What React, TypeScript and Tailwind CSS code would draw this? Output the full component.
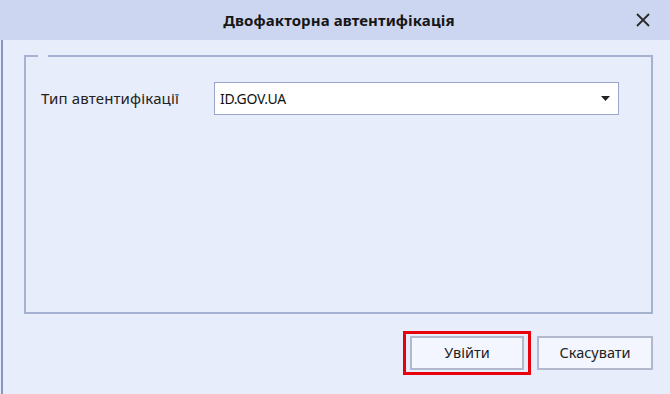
import React from "react";

export default function App() {
  return (
    <div
      className="w-[670px] h-[394px] bg-[#e8edfc] flex flex-col overflow-hidden"
      style={{ fontFamily: '"Noto Sans", "Open Sans", sans-serif' }}
    >
      <div className="relative h-[40px] bg-[#ccd6f0] flex items-center justify-center shrink-0">
        <span className="text-[15px] font-bold text-[#161616] tracking-[0.1px] ml-[8px]">Двофакторна автентифікація</span>
        <svg className="absolute left-[636px] top-[13px]" width="14" height="14" viewBox="0 0 14 14">
          <path d="M1 1 L13 13 M13 1 L1 13" stroke="#2a2a2a" strokeWidth="1.8" fill="none" />
        </svg>
      </div>
      <div className="flex-1 ml-[1px] border-l-2 border-[#8c96bd] flex flex-col pl-[21px] pr-[17px]">
        <div className="relative mt-[15px] h-[259px] border-2 border-[#a7b1d2]">
          <div className="absolute left-[12px] top-[-2px] w-[10px] h-[2px] bg-[#e8edfc]" />
          <div className="flex items-center mt-[25px] pl-[15px]">
            <span className="w-[173px] text-[15px] text-[#222] tracking-[0.15px]">Тип автентифікації</span>
            <div className="w-[405px] h-[33px] bg-white border border-[#9aa5c9] flex items-center pl-[5px] pr-[8px]">
              <span className="flex-1 text-[14px] text-[#111] tracking-[-0.3px]">ID.GOV.UA</span>
              <svg width="9" height="5" viewBox="0 0 9 5">
                <path d="M0 0 L9 0 L4.5 5 Z" fill="#222" />
              </svg>
            </div>
          </div>
        </div>
        <div className="flex justify-end items-center mt-[17px] gap-[6px]">
          <div className="border-[3px] border-[#e8000b] px-[4px] py-[2px]">
            <button className="w-[114px] h-[34px] bg-[#f3f6fe] border-2 border-[#b2b9cc] text-[14.5px] text-[#222]">
              Увійти
            </button>
          </div>
          <button className="w-[116px] h-[34px] bg-[#f3f6fe] border-2 border-[#b2b9cc] text-[14.5px] text-[#222]">
            Скасувати
          </button>
        </div>
      </div>
    </div>
  );
}
